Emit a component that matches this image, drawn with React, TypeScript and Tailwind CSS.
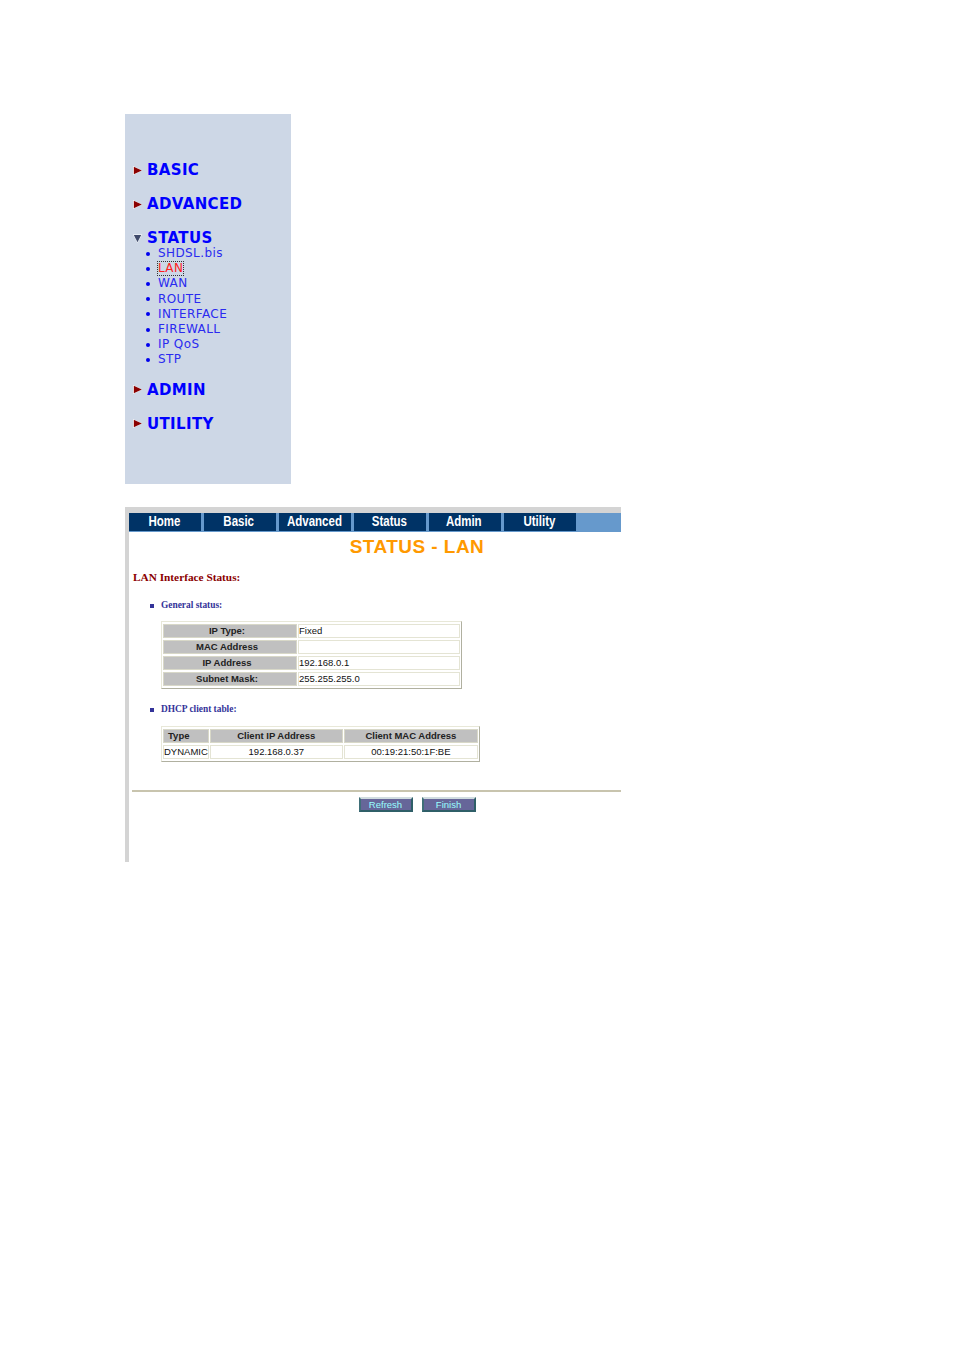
import React from 'react';

const navItems = ['Home', 'Basic', 'Advanced', 'Status', 'Admin', 'Utility'];
const statusLinks = ['SHDSL.bis', 'LAN', 'WAN', 'ROUTE', 'INTERFACE', 'FIREWALL', 'IP QoS', 'STP'];

const Closed = () => (
  <svg width="9" height="9" viewBox="0 0 9 9" className="shrink-0">
    <path d="M0 0 L9 4.5 L0 9 Z" fill="#ffffff" />
    <path d="M0.8 0.8 L8.8 4.5 L0.8 8.2 Z" fill="#8b0000" />
  </svg>
);

const Open = () => (
  <svg width="9" height="9" viewBox="0 0 9 9" className="shrink-0">
    <path d="M0 0.5 L9 0.5 L4.5 9 Z" fill="#ffffff" />
    <path d="M0.8 1 L8.2 1 L4.5 8.2 Z" fill="#3f4a6b" />
  </svg>
);

const Heading = ({ label, open, className }: { label: string; open?: boolean; className?: string }) => (
  <div className={`flex items-center h-4 pl-[8px] ${className ?? ''}`}>
    {open ? <Open /> : <Closed />}
    <span className="ml-[5px] font-['DejaVu_Sans',sans-serif] font-bold text-[15px] tracking-[0.35px] leading-4 text-[#0000ff]">{label}</span>
  </div>
);

const labelCell = 'bg-[#c0c0c0] border border-[#d8d8c8] text-center font-bold text-[9.5px] leading-[12px] text-[#222] p-0';
const valueCell = 'bg-white border border-[#e4e4d4] text-[9.5px] leading-[12px] text-[#111] px-0 py-0';
const tableFrame = 'ml-[32px] border-separate border-spacing-x-[1px] border-spacing-y-[2px] border border-t-[#e8e8d8] border-l-[#e8e8d8] border-r-[#b0b0a0] border-b-[#b0b0a0]';

const App: React.FC = () => {
  return (
    <div className="w-[954px] h-[1350px] bg-white pl-[125px] pt-[114px] font-['Liberation_Sans',Arial,sans-serif]">
      {/* Left menu */}
      <div className="w-[166px] h-[370px] bg-[#cdd7e6] pt-[48px]">
        <Heading label="BASIC" />
        <Heading label="ADVANCED" className="mt-[18px]" />
        <Heading label="STATUS" open className="mt-[18px]" />
        <ul>
          {statusLinks.map((link) => (
            <li key={link} className="flex items-center h-[15.2px] pl-[21px]">
              <span className="w-1 h-1 rounded-full bg-[#0000ee] shrink-0" />
              {link === 'LAN' ? (
                <span className="ml-2 font-['DejaVu_Sans',sans-serif] text-[12px] tracking-[0.4px] leading-[13px] text-[#ff2020] outline-1 outline-dotted outline-[#333]">{link}</span>
              ) : (
                <span className="ml-2 font-['DejaVu_Sans',sans-serif] text-[12px] tracking-[0.4px] leading-[13px] text-[#2a2af0]">{link}</span>
              )}
            </li>
          ))}
        </ul>
        <Heading label="ADMIN" className="mt-[14px]" />
        <Heading label="UTILITY" className="mt-[18px]" />
      </div>

      {/* Status page */}
      <div className="mt-[23px] w-[496px] h-[355px] border-l-4 border-t-[6px] border-[#d4d4d4]">
        <div className="flex h-[19px] bg-[#6699cc] pb-px">
          {navItems.map((item) => (
            <div key={item} className="w-[72px] mr-[3px] pb-px pr-[2px] bg-[#003366] flex items-center justify-center text-white font-bold text-[14px]">
              <span className="inline-block scale-x-[0.82]">{item}</span>
            </div>
          ))}
        </div>

        <h1 className="ml-[84px] mt-[4px] h-[22px] text-center font-bold text-[19px] tracking-[0.45px] leading-[22px] text-[#ff9900]">STATUS - LAN</h1>

        <p className="ml-1 mt-[12px] font-['Liberation_Serif',serif] font-bold text-[11.3px] leading-[14px] text-[#8b0000]">LAN Interface Status:</p>

        <div className="flex items-center ml-[21px] mt-[16px] h-[11px]">
          <span className="w-1 h-1 bg-[#333399]" />
          <span className="ml-[7px] font-['Liberation_Serif',serif] font-bold text-[9.4px] text-[#333399]">General status:</span>
        </div>

        <table className={`${tableFrame} mt-[10px] w-[301px]`}>
          <tbody>
            {[
              ['IP Type:', 'Fixed'],
              ['MAC Address', ''],
              ['IP Address', '192.168.0.1'],
              ['Subnet Mask:', '255.255.255.0'],
            ].map(([label, value]) => (
              <tr key={label} className="h-[14px]">
                <td className={`${labelCell} w-[134px] !pr-[6px]`}>{label}</td>
                <td className={valueCell}>{value}</td>
              </tr>
            ))}
          </tbody>
        </table>

        <div className="flex items-center ml-[21px] mt-[15px] h-[11px]">
          <span className="w-1 h-1 bg-[#333399]" />
          <span className="ml-[7px] font-['Liberation_Serif',serif] font-bold text-[9.4px] text-[#333399]">DHCP client table:</span>
        </div>

        <table className={`${tableFrame} mt-[11px] w-[319px]`}>
          <tbody>
            <tr className="h-[14px]">
              <td className={`${labelCell} w-[45px] !text-left !pl-1`}>Type</td>
              <td className={`${labelCell} w-[133px]`}>Client IP Address</td>
              <td className={labelCell}>Client MAC Address</td>
            </tr>
            <tr className="h-[14px]">
              <td className={valueCell}>DYNAMIC</td>
              <td className={`${valueCell} text-center`}>192.168.0.37</td>
              <td className={`${valueCell} text-center`}>00:19:21:50:1F:BE</td>
            </tr>
          </tbody>
        </table>

        <hr className="ml-[3px] mt-[28px] border-0 h-[2px] bg-[#c8c4ae]" />

        <div className="ml-[84px] mt-[5px] flex justify-center gap-[9px]">
          {['Refresh', 'Finish'].map((label) => (
            <button key={label} className="w-[54px] h-[15px] bg-[#666699] border-2 border-t-[#d0dce0] border-l-[#3f6f78] border-r-[#2f5f68] border-b-[#2f5f68] text-[9.5px] leading-[10px] text-[#99ffff]">
              {label}
            </button>
          ))}
        </div>
      </div>
    </div>
  );
};

export default App;
